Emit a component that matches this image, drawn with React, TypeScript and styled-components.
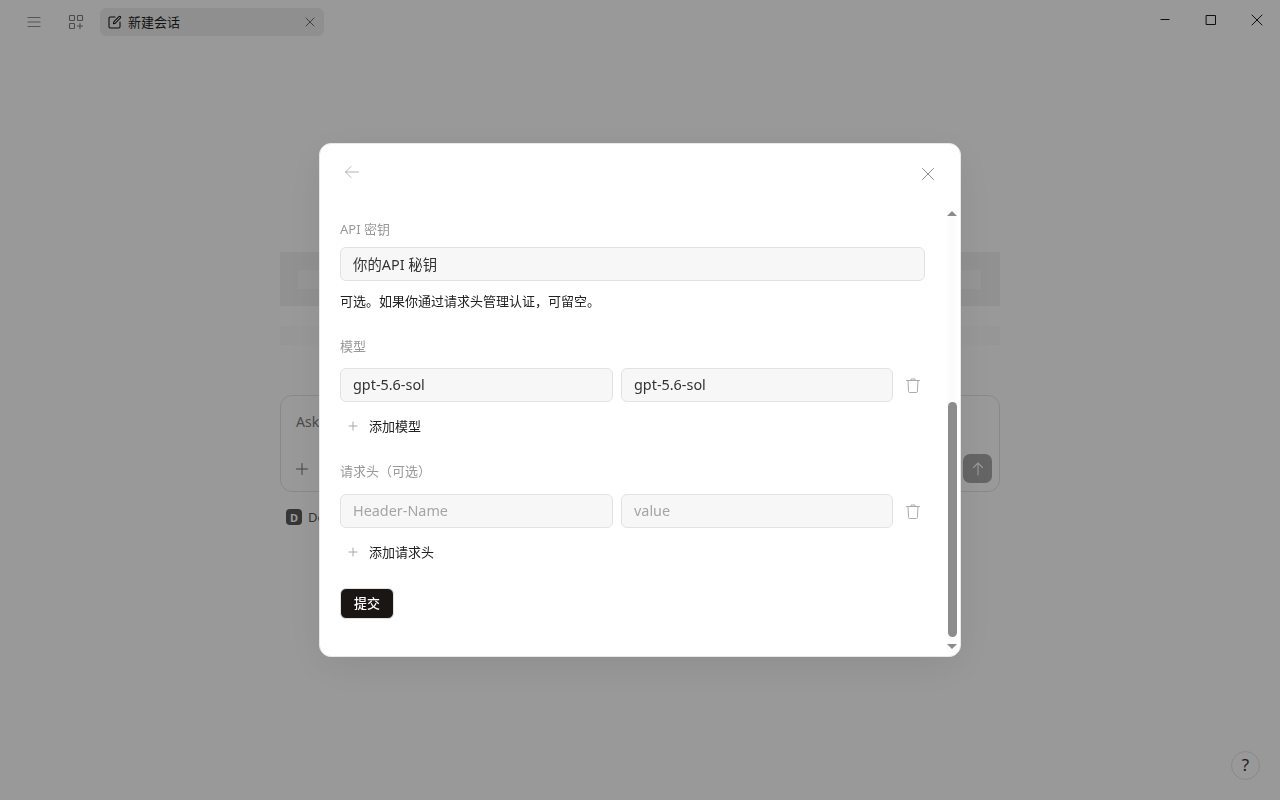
import React from 'react';
import styled, { createGlobalStyle } from 'styled-components';

const GlobalStyle = createGlobalStyle`
  html, body {
    margin: 0;
    padding: 0;
    height: 100%;
    overflow: hidden;
    background: #fff;
    font-family: "Noto Sans", "Noto Sans CJK SC", sans-serif;
  }
  * {
    box-sizing: border-box;
  }
`;

const IconStroke = styled.svg<{ $size: number; $color: string; $weight?: number }>`
  width: ${({ $size }) => $size}px;
  height: ${({ $size }) => $size}px;
  flex: none;
  fill: none;
  stroke: ${({ $color }) => $color};
  stroke-width: ${({ $weight }) => $weight ?? 1}px;
  stroke-linecap: round;
  stroke-linejoin: round;
`;

function TrashIcon() {
  return (
    <IconStroke viewBox="0 0 16 16" $size={16} $color="#ababab">
      <path d="M1.5 2.5h13M6 2.5V1h4v1.5M3 2.5l.6 11.2c0 .5.4.8.9.8h7c.5 0 .9-.3.9-.8l.6-11.2" />
    </IconStroke>
  );
}

function PlusIcon() {
  return (
    <IconStroke viewBox="0 0 10 10" $size={10} $color="#a8a8a8">
      <path d="M5 1v8M1 5h8" />
    </IconStroke>
  );
}

export default function App() {
  return (
    <>
      <GlobalStyle />
      <Page>
        <TopBar>
          <TopLeft>
            <BarButton aria-label="menu">
              <IconStroke viewBox="0 0 14 14" $size={14} $color="#8f8f8f" $weight={1.2}>
                <path d="M1 2.5h12M1 7h12M1 11.5h12" />
              </IconStroke>
            </BarButton>
            <BarButton aria-label="apps">
              <IconStroke viewBox="0 0 16 16" $size={16} $color="#7d7d7d" $weight={1.1}>
                <rect x="1.5" y="1.5" width="5" height="5" rx="0.8" />
                <rect x="9.5" y="1.5" width="5" height="5" rx="0.8" />
                <rect x="1.5" y="9.5" width="5" height="5" rx="0.8" />
                <path d="M12 9.5v5M9.5 12h5" />
              </IconStroke>
            </BarButton>
            <Tab>
              <IconStroke viewBox="0 0 14 14" $size={14} $color="#111111" $weight={1.05}>
                <path d="M7 2H2.2C1.5 2 1 2.5 1 3.2v8.6c0 .7.5 1.2 1.2 1.2h8.6c.7 0 1.2-.5 1.2-1.2V7" />
                <path d="M5.5 8.7l.4-2L11 1.6c.4-.4 1-.4 1.4 0s.4 1 0 1.4L7.4 8.2z" />
              </IconStroke>
              <TabTitle>新建会话</TabTitle>
              <IconStroke viewBox="0 0 10 10" $size={10} $color="#6e6e6e">
                <path d="M1 1l8 8M9 1L1 9" />
              </IconStroke>
            </Tab>
          </TopLeft>
          <WindowControls>
            <WindowButton aria-label="minimize">
              <IconStroke viewBox="0 0 12 12" $size={12} $color="#1a1a1a">
                <path d="M1.5 5.5h9" strokeLinecap="butt" />
              </IconStroke>
            </WindowButton>
            <WindowButton aria-label="maximize">
              <IconStroke viewBox="0 0 12 12" $size={12} $color="#1a1a1a">
                <rect x="1.5" y="1.5" width="9" height="9" />
              </IconStroke>
            </WindowButton>
            <WindowButton aria-label="close">
              <IconStroke viewBox="0 0 12 12" $size={12} $color="#1a1a1a">
                <path d="M1 1l10 10M11 1L1 11" />
              </IconStroke>
            </WindowButton>
          </WindowControls>
        </TopBar>

        <Workspace>
          <LogoSkeleton>
            <LogoInner />
          </LogoSkeleton>
          <SubtitleSkeleton />
          <Composer>
            <ComposerText>Ask</ComposerText>
            <ComposerActions>
              <IconStroke viewBox="0 0 12 12" $size={12} $color="#6f6f6f">
                <path d="M6 .5v11M.5 6h11" />
              </IconStroke>
              <SendButton>
                <IconStroke viewBox="0 0 14 14" $size={14} $color="#ffffff" $weight={1.1}>
                  <path d="M7 13V1M2.5 5.5L7 1l4.5 4.5" />
                </IconStroke>
              </SendButton>
            </ComposerActions>
          </Composer>
          <ProviderRow>
            <ProviderBadge>D</ProviderBadge>
            <ProviderName>De</ProviderName>
          </ProviderRow>
        </Workspace>

        <HelpButton>?</HelpButton>
      </Page>

      <Overlay>
        <Modal>
          <ModalHeader>
            <IconStroke viewBox="0 0 14 14" $size={14} $color="#b5b5b5">
              <path d="M13.5 7H.5M6 1.5L.5 7 6 12.5" />
            </IconStroke>
            <CloseIcon viewBox="0 0 12 12" $size={12} $color="#8a8a8a">
              <path d="M.5.5l11 11M11.5.5l-11 11" />
            </CloseIcon>
          </ModalHeader>

          <ModalBody>
            <Form>
              <FieldLabel>API 密钥</FieldLabel>
              <TextInput readOnly defaultValue="你的API 秘钥" />
              <HelpText>可选。如果你通过请求头管理认证，可留空。</HelpText>

              <SectionLabel $after={8}>模型</SectionLabel>
              <PairRow>
                <TextInput readOnly defaultValue="gpt-5.6-sol" />
                <TextInput readOnly defaultValue="gpt-5.6-sol" />
                <TrashSlot>
                  <TrashIcon />
                </TrashSlot>
              </PairRow>
              <AddRow>
                <PlusIcon />
                <span>添加模型</span>
              </AddRow>

              <SectionLabel $after={9}>请求头（可选）</SectionLabel>
              <PairRow>
                <TextInput readOnly placeholder="Header-Name" />
                <TextInput readOnly placeholder="value" />
                <TrashSlot>
                  <TrashIcon />
                </TrashSlot>
              </PairRow>
              <AddRow>
                <PlusIcon />
                <span>添加请求头</span>
              </AddRow>

              <SubmitButton>提交</SubmitButton>
            </Form>

            <ScrollTrack>
              <ArrowUp />
              <ScrollThumb />
              <ArrowDown />
            </ScrollTrack>
          </ModalBody>
        </Modal>
      </Overlay>
    </>
  );
}

const Page = styled.div`
  width: 1280px;
  height: 800px;
  display: flex;
  flex-direction: column;
  background: #fff;
  position: relative;
`;

const TopBar = styled.header`
  height: 44px;
  flex: none;
  display: flex;
  justify-content: space-between;
  align-items: flex-start;
`;

const TopLeft = styled.div`
  display: flex;
  align-items: center;
  padding: 8px 0 0 20px;
`;

const BarButton = styled.div`
  width: 28px;
  height: 28px;
  margin-right: 14px;
  display: flex;
  align-items: center;
  justify-content: center;

  & + & {
    margin-right: 10px;
  }
`;

const Tab = styled.div`
  width: 224px;
  height: 28px;
  padding: 0 9px 0 8px;
  border-radius: 6px;
  background: #efefef;
  display: flex;
  align-items: center;
  gap: 6px;
`;

const TabTitle = styled.span`
  flex: 1;
  font-size: 13px;
  padding-bottom: 2px;
  color: #222;
`;

const WindowControls = styled.div`
  display: flex;
  padding-top: 14px;
  padding-right: 17px;
  gap: 34px;
`;

const WindowButton = styled.div`
  width: 12px;
  height: 12px;
  display: flex;
`;

const Workspace = styled.main`
  width: 720px;
  margin: 208px auto 0;
  display: flex;
  flex-direction: column;
`;

const LogoSkeleton = styled.div`
  height: 54px;
  padding: 18px 19px 17px 18px;
  background: #f2f2f2;
`;

const LogoInner = styled.div`
  height: 100%;
  background: #f9f9f9;
`;

const SubtitleSkeleton = styled.div`
  height: 19px;
  margin-top: 20px;
  background: #fbfbfb;
`;

const Composer = styled.div`
  height: 97px;
  margin-top: 50px;
  padding: 16px 7px 8px 15px;
  border: 1px solid #e4e4e4;
  border-radius: 12px;
  display: flex;
  flex-direction: column;
  justify-content: space-between;
`;

const ComposerText = styled.div`
  font-size: 14px;
  line-height: 20px;
  color: #7d7d7d;
`;

const ComposerActions = styled.div`
  display: flex;
  align-items: center;
  justify-content: space-between;
`;

const SendButton = styled.div`
  width: 29px;
  height: 29px;
  border-radius: 7px;
  background: #a8a8a8;
  display: flex;
  align-items: center;
  justify-content: center;
`;

const ProviderRow = styled.div`
  margin-top: 16px;
  padding-left: 6px;
  display: flex;
  align-items: center;
  gap: 6px;
`;

const ProviderBadge = styled.span`
  width: 16px;
  height: 16px;
  border-radius: 4px;
  background: #5a5a5a;
  color: #fff;
  font-size: 11px;
  font-weight: 700;
  display: flex;
  align-items: center;
  justify-content: center;
`;

const ProviderName = styled.span`
  font-size: 13px;
  color: #555;
`;

const HelpButton = styled.div`
  position: absolute;
  right: 20px;
  bottom: 20px;
  width: 29px;
  height: 29px;
  padding-bottom: 2px;
  border: 1px solid #e6e6e6;
  border-radius: 50%;
  display: flex;
  align-items: center;
  justify-content: center;
  font-size: 17px;
  color: #333;
`;

const Overlay = styled.div`
  position: fixed;
  inset: 0;
  background: rgba(0, 0, 0, 0.4);
  display: flex;
  align-items: center;
  justify-content: center;
`;

const Modal = styled.section`
  width: 642px;
  height: 514px;
  border-radius: 12px;
  background: #fff;
  border: 1px solid #e8e8e8;
  box-shadow: 0 10px 40px rgba(0, 0, 0, 0.08);
  display: flex;
  flex-direction: column;
  overflow: hidden;
`;

const ModalHeader = styled.div`
  height: 64px;
  flex: none;
  padding: 21px 26px 0 25px;
  display: flex;
  align-items: flex-start;
  justify-content: space-between;
`;

const CloseIcon = styled(IconStroke)`
  margin-top: 3px;
`;

const ModalBody = styled.div`
  flex: 1;
  min-height: 0;
  display: flex;
  padding-bottom: 4px;
`;

const Form = styled.div`
  width: 605px;
  padding: 12px 0 0 20px;
  display: flex;
  flex-direction: column;
  align-items: flex-start;
`;

const FieldLabel = styled.label`
  font-size: 13px;
  line-height: 18px;
  color: #999;
  margin-bottom: 9px;
`;

const SectionLabel = styled(FieldLabel)<{ $after: number }>`
  margin-top: 26px;
  margin-bottom: ${({ $after }) => $after}px;
`;

const TextInput = styled.input`
  width: 100%;
  min-width: 0;
  height: 34px;
  padding: 0 12px 2px;
  border: 1px solid #e2e2e2;
  border-radius: 6px;
  background: #f7f7f7;
  font-family: inherit;
  font-size: 14.4px;
  color: #333;
  outline: none;

  &::placeholder {
    color: #a5a5a5;
  }
`;

const HelpText = styled.p`
  margin: 11px 0 1px;
  font-size: 13px;
  line-height: 18px;
  color: #222;
`;

const PairRow = styled.div`
  width: 100%;
  display: grid;
  grid-template-columns: 273px 272px 1fr;
  column-gap: 8px;
  margin-top: 5px;
`;

const TrashSlot = styled.div`
  display: flex;
  align-items: center;
  justify-content: center;
  padding-top: 2px;
`;

const AddRow = styled.div`
  margin-top: 15px;
  margin-bottom: 1px;
  padding-left: 8px;
  display: flex;
  align-items: center;
  gap: 11px;
  font-size: 13px;
  line-height: 18px;
  color: #222;
`;

const SubmitButton = styled.button`
  width: 54px;
  height: 31px;
  margin-top: 26px;
  padding: 0 0 2px;
  border: 1px solid #e2e2e2;
  border-radius: 6px;
  background: #1a1614;
  color: #fff;
  font-family: inherit;
  font-size: 13px;
  font-weight: 500;
`;

const ScrollTrack = styled.div`
  width: 10px;
  margin-left: 22px;
  background: #fcfcfc;
  display: flex;
  flex-direction: column;
  align-items: center;
`;

const ArrowUp = styled.span`
  width: 0;
  height: 0;
  margin: 3px 0 auto;
  border-left: 5px solid transparent;
  border-right: 5px solid transparent;
  border-bottom: 5px solid #8a8a8a;
`;

const ScrollThumb = styled.div`
  width: 9px;
  height: 235px;
  border-radius: 5px;
  background: #8c8c8c;
`;

const ArrowDown = styled.span`
  width: 0;
  height: 0;
  margin: 7px 0 3px;
  border-left: 5px solid transparent;
  border-right: 5px solid transparent;
  border-top: 5px solid #8a8a8a;
`;
